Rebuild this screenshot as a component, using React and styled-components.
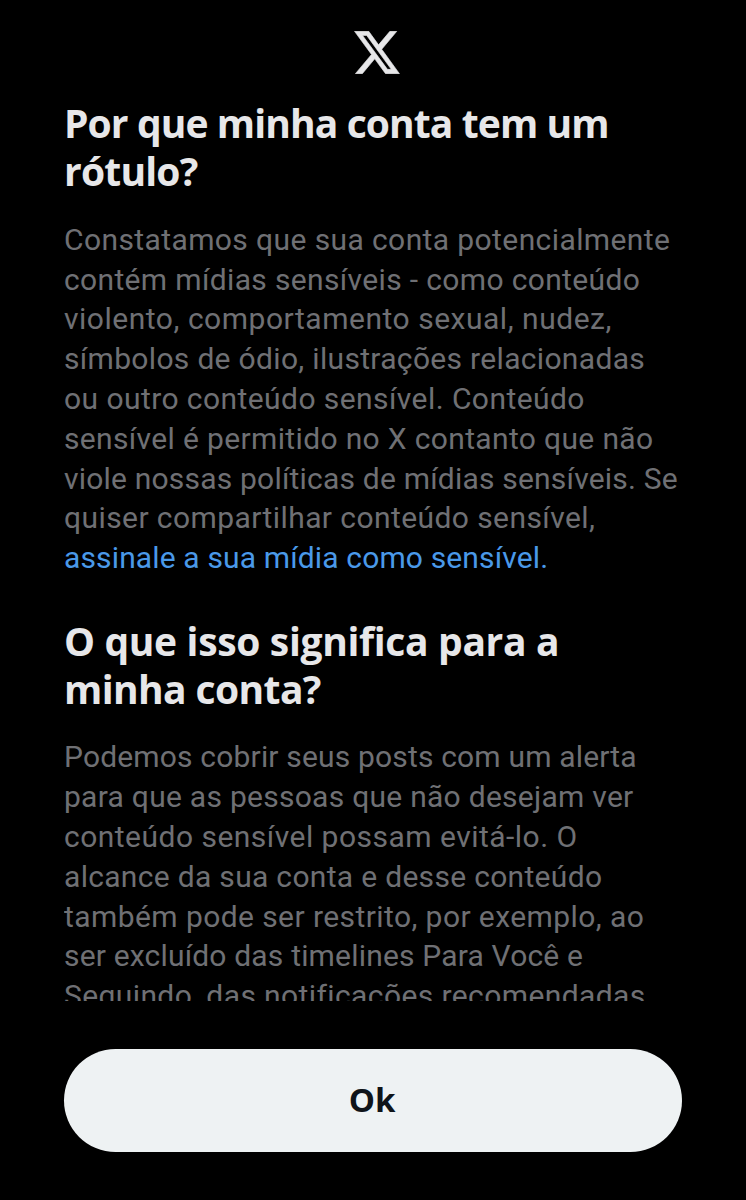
import styled, { createGlobalStyle } from 'styled-components';

const GlobalStyle = createGlobalStyle`
  * {
    box-sizing: border-box;
  }

  body {
    margin: 0;
    background-color: #000;
  }
`;

const Screen = styled.main`
  height: 1200px;
  display: flex;
  flex-direction: column;
  padding: 31px 64px 48px;
  overflow: hidden;
  color: #e7e7e9;
  background-color: #000;
  font-family: Roboto, 'Liberation Sans', sans-serif;
`;

const Header = styled.header`
  display: flex;
  justify-content: center;
  padding-left: 7px;
  margin-bottom: 15.3px;
`;

const Logo = styled.svg`
  display: block;
  width: 46px;
  height: 43px;
  fill: #e7e7e9;
  stroke: #e7e7e9;
  stroke-width: 0.3;
`;

const Content = styled.div`
  height: 911.7px;
  flex-shrink: 0;
  display: flex;
  flex-direction: column;
  gap: 38.8px;
  padding-top: 10px;
  overflow: hidden;
`;

const Section = styled.section`
  display: flex;
  flex-direction: column;
  gap: 25.2px;
`;

const Title = styled.h1`
  margin: 0;
  font-family: 'Open Sans', sans-serif;
  font-size: 39px;
  font-weight: 700;
  line-height: 47.7px;
`;

const Text = styled.p`
  margin: 0;
  font-size: 30px;
  line-height: 39.8px;
  color: #6f7074;
`;

const Line = styled.span`
  display: block;
  white-space: nowrap;
  letter-spacing: ${(props) => props.$tracking}px;
`;

const Link = styled.a`
  color: #4a99e9;
  text-decoration: none;
`;

const Footer = styled.footer`
  display: flex;
  margin-top: 48px;
`;

const Button = styled.button`
  width: 618px;
  height: 103px;
  flex-shrink: 0;
  padding: 0 2px 2px 0;
  border: 0;
  border-radius: 52px;
  color: #0f1419;
  background-color: #eef2f3;
  font-family: 'Open Sans', sans-serif;
  font-size: 33px;
  font-weight: 700;
`;

const SECTIONS = [
  {
    title: [
      ['Por que minha conta tem um', -0.89],
      ['rótulo?', -0.8],
    ],
    text: [
      ['Constatamos que sua conta potencialmente', 0.4],
      ['contém mídias sensíveis - como conteúdo', 0.35],
      ['violento, comportamento sexual, nudez,', 0.52],
      ['símbolos de ódio, ilustrações relacionadas', 0.32],
      ['ou outro conteúdo sensível. Conteúdo', 0.43],
      ['sensível é permitido no X contanto que não', 0.35],
      ['viole nossas políticas de mídias sensíveis. Se', 0.2],
      ['quiser compartilhar conteúdo sensível,', 0.42],
    ],
    link: ['assinale a sua mídia como sensível.', 0.14],
  },
  {
    title: [
      ['O que isso significa para a', -0.34],
      ['minha conta?', -0.6],
    ],
    text: [
      ['Podemos cobrir seus posts com um alerta', 0.17],
      ['para que as pessoas que não desejam ver', 0.27],
      ['conteúdo sensível possam evitá-lo. O', 0.48],
      ['alcance da sua conta e desse conteúdo', 0.31],
      ['também pode ser restrito, por exemplo, ao', 0.42],
      ['ser excluído das timelines Para Você e', 0.18],
      ['Seguindo, das notificações recomendadas', 0.4],
    ],
  },
];

function Lines({ items }) {
  return items.map(([text, tracking]) => (
    <Line key={text} $tracking={tracking}>
      {text}
    </Line>
  ));
}

export default function App() {
  return (
    <>
      <GlobalStyle />
      <Screen>
        <Header>
          <Logo viewBox="1 2.1 22.1 19.8" preserveAspectRatio="none" aria-label="X">
            <path d="M18.244 2.25h3.308l-7.227 8.26 8.502 11.24H16.17l-5.214-6.817L4.99 21.75H1.68l7.73-8.835L1.254 2.25H8.08l4.713 6.231zm-1.161 17.52h1.833L7.084 4.126H5.117z" />
          </Logo>
        </Header>
        <Content>
          {SECTIONS.map((section) => (
            <Section key={section.title[0][0]}>
              <Title>
                <Lines items={section.title} />
              </Title>
              <Text>
                <Lines items={section.text} />
                {section.link && (
                  <Link href="#">
                    <Lines items={[section.link]} />
                  </Link>
                )}
              </Text>
            </Section>
          ))}
        </Content>
        <Footer>
          <Button type="button">Ok</Button>
        </Footer>
      </Screen>
    </>
  );
}
